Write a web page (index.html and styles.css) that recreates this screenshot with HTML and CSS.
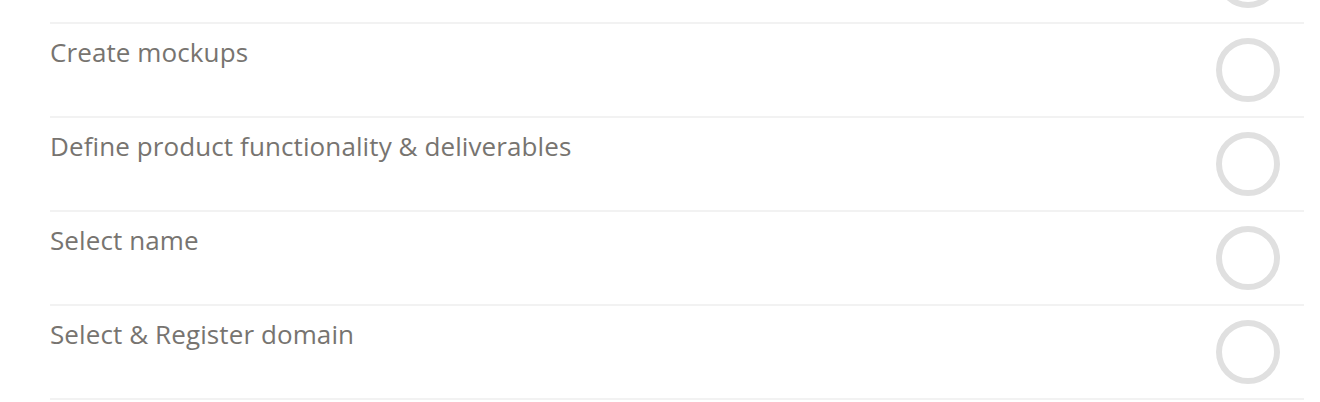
FILE: index.html
```html
<!DOCTYPE html>
<html lang="en">
<head>
    <meta charset="UTF-8">
    <title>Tasks</title>
    <link rel="stylesheet" href="styles.css">
</head>
<body>
    <ul class="task-list">
        <li class="task">
            <span class="task-name"></span>
            <span class="task-check"></span>
        </li>
        <li class="task">
            <span class="task-name">Create mockups</span>
            <span class="task-check"></span>
        </li>
        <li class="task">
            <span class="task-name">Define product functionality &amp; deliverables</span>
            <span class="task-check"></span>
        </li>
        <li class="task">
            <span class="task-name">Select name</span>
            <span class="task-check"></span>
        </li>
        <li class="task">
            <span class="task-name">Select &amp; Register domain</span>
            <span class="task-check"></span>
        </li>
    </ul>
</body>
</html>
```

FILE: styles.css
```css
body {
    margin: 0;
    background: #fff;
    font-family: 'Open Sans', 'Lato', sans-serif;
    overflow: hidden;
}

.task-list {
    list-style: none;
    margin: -70px 16px 0 50px;
    padding: 0;
}

.task {
    display: flex;
    justify-content: space-between;
    align-items: flex-start;
    height: 92px;
    border-bottom: 2px solid #f2f2f2;
}

.task-name {
    padding-top: 12px;
    font-size: 26px;
    line-height: 32px;
    letter-spacing: 0.1px;
    color: #777470;
}

.task-check {
    margin: 14px 24px 0 0;
    width: 64px;
    height: 64px;
    box-sizing: border-box;
    border: 6px solid #e0e0e0;
    border-radius: 50%;
}
```
